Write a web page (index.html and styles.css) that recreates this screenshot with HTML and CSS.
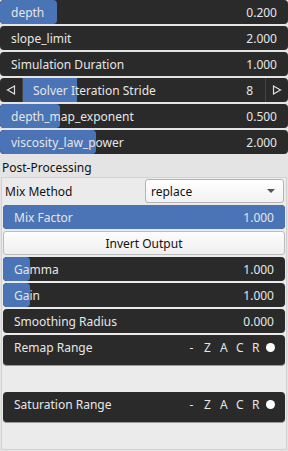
FILE: index.html
```html
<!DOCTYPE html>
<html>
<head>
<meta charset="utf-8">
<link rel="stylesheet" href="styles.css">
</head>
<body>
<div class="top">
  <div class="slider"><div class="fill" style="width:57px"></div><span class="lbl">depth</span><span class="val">0.200</span></div>
  <div class="slider"><span class="lbl">slope_limit</span><span class="val">2.000</span></div>
  <div class="slider"><span class="lbl">Simulation Duration</span><span class="val">1.000</span></div>
  <div class="slider stride">
    <div class="arrow">
      <svg width="10" height="10" viewBox="0 0 10 10"><path d="M8.5 1 L1.5 5 L8.5 9 Z" fill="none" stroke="#ddd" stroke-width="1.2"/></svg>
    </div>
    <div class="mid"><div class="fill sq" style="width:54px"></div><span class="lbl">Solver Iteration Stride</span><span class="val">8</span></div>
    <div class="arrow">
      <svg width="10" height="10" viewBox="0 0 10 10"><path d="M1.5 1 L8.5 5 L1.5 9 Z" fill="none" stroke="#ddd" stroke-width="1.2"/></svg>
    </div>
  </div>
  <div class="slider"><div class="fill" style="width:60px"></div><span class="lbl">depth_map_exponent</span><span class="val">0.500</span></div>
  <div class="slider"><div class="fill" style="width:96px"></div><span class="lbl">viscosity_law_power</span><span class="val">2.000</span></div>
</div>
<div class="section-title">Post-Processing</div>
<div class="panel">
  <div class="combo-row">
    <span class="combo-label">Mix Method</span>
    <div class="combo"><span>replace</span><span class="caret"></span></div>
  </div>
  <div class="slider"><div class="fill" style="width:100%"></div><span class="lbl">Mix Factor</span><span class="val">1.000</span></div>
  <div class="button">Invert Output</div>
  <div class="slider"><div class="fill" style="width:27px"></div><span class="lbl">Gamma</span><span class="val">1.000</span></div>
  <div class="slider"><div class="fill" style="width:27px"></div><span class="lbl">Gain</span><span class="val">1.000</span></div>
  <div class="slider"><span class="lbl">Smoothing Radius</span><span class="val">0.000</span></div>
  <div class="range">
    <div class="range-row"><span class="lbl">Remap Range</span><span class="flags"><span>-</span><span>Z</span><span>A</span><span>C</span><span>R</span><span class="dot"></span></span></div>
  </div>
  <div class="range">
    <div class="range-row"><span class="lbl">Saturation Range</span><span class="flags"><span>-</span><span>Z</span><span>A</span><span>C</span><span>R</span><span class="dot"></span></span></div>
  </div>
</div>
</body>
</html>
```
FILE: styles.css
```css
html, body {
  margin: 0;
  padding: 0;
}
body {
  width: 288px;
  height: 451px;
  background: #e4e4e4;
  font-family: "Noto Sans", "Open Sans", sans-serif;
  font-size: 12px;
  color: #111;
  overflow: hidden;
}
.top {
  display: flex;
  flex-direction: column;
  gap: 2px;
}
.slider {
  position: relative;
  height: 24px;
  background: #2a2a2a;
  border-radius: 4px;
  display: flex;
  align-items: center;
  justify-content: space-between;
  padding: 0 11px;
  color: #e6e6e6;
  box-sizing: border-box;
  overflow: hidden;
}
.fill {
  position: absolute;
  left: 0;
  top: 0;
  bottom: 0;
  background: #4a74b6;
  border-radius: 4px;
}
.fill.sq {
  border-radius: 0;
}
.lbl, .val {
  position: relative;
  white-space: nowrap;
}
.stride {
  padding: 0;
}
.arrow {
  width: 22px;
  height: 24px;
  display: flex;
  align-items: center;
  justify-content: center;
  flex: none;
}
.stride .arrow:first-child {
  border-right: 1px solid #444;
}
.stride .arrow:last-child {
  border-left: 1px solid #444;
}
.mid {
  position: relative;
  flex: 1;
  height: 24px;
  display: flex;
  align-items: center;
  justify-content: space-between;
  padding: 0 12px 0 10px;
}
.section-title {
  height: 21px;
  line-height: 20px;
  padding: 2px 2px 0;
  box-sizing: border-box;
  margin-top: 2px;
}
.panel {
  margin: 0 1px;
  border: 1px solid #d2d2d2;
  background: #ebebeb;
  padding: 1px 1px 0 1px;
  height: 273px;
  box-sizing: border-box;
  display: flex;
  flex-direction: column;
  gap: 2px;
}
.combo-row {
  height: 24px;
  display: flex;
  align-items: center;
  justify-content: space-between;
  padding-right: 1px;
}
.combo-label {
  padding-left: 2px;
}
.combo {
  width: 139px;
  height: 24px;
  box-sizing: border-box;
  border: 1px solid #b4b4b4;
  border-radius: 3px;
  background: linear-gradient(#ffffff, #f2f2f2);
  display: flex;
  align-items: center;
  justify-content: space-between;
  padding: 0 8px 0 5px;
}
.caret {
  width: 0;
  height: 0;
  border-left: 4px solid transparent;
  border-right: 4px solid transparent;
  border-top: 4px solid #555;
}
.panel .slider {
  padding: 0 11px 0 11px;
}
.button {
  height: 24px;
  box-sizing: border-box;
  border: 1px solid #bcbcbc;
  border-radius: 3px;
  background: linear-gradient(#fdfdfd, #eeeeee);
  display: flex;
  align-items: center;
  justify-content: center;
}
.range {
  height: 55px;
}
.range-row {
  height: 31px;
  background: #2a2a2a;
  border-radius: 4px;
  color: #e6e6e6;
  display: flex;
  align-items: flex-start;
  justify-content: space-between;
  padding: 4px 10px 0 11px;
  box-sizing: border-box;
  border-bottom: 1px solid #9a9a9a;
}
.flags {
  display: flex;
  align-items: center;
  gap: 9px;
  height: 17px;
}
.flags span {
  width: 7px;
  text-align: center;
}
.flags .dot {
  width: 9px;
  height: 9px;
  border-radius: 50%;
  background: #fff;
  margin-left: -2px;
}
```
